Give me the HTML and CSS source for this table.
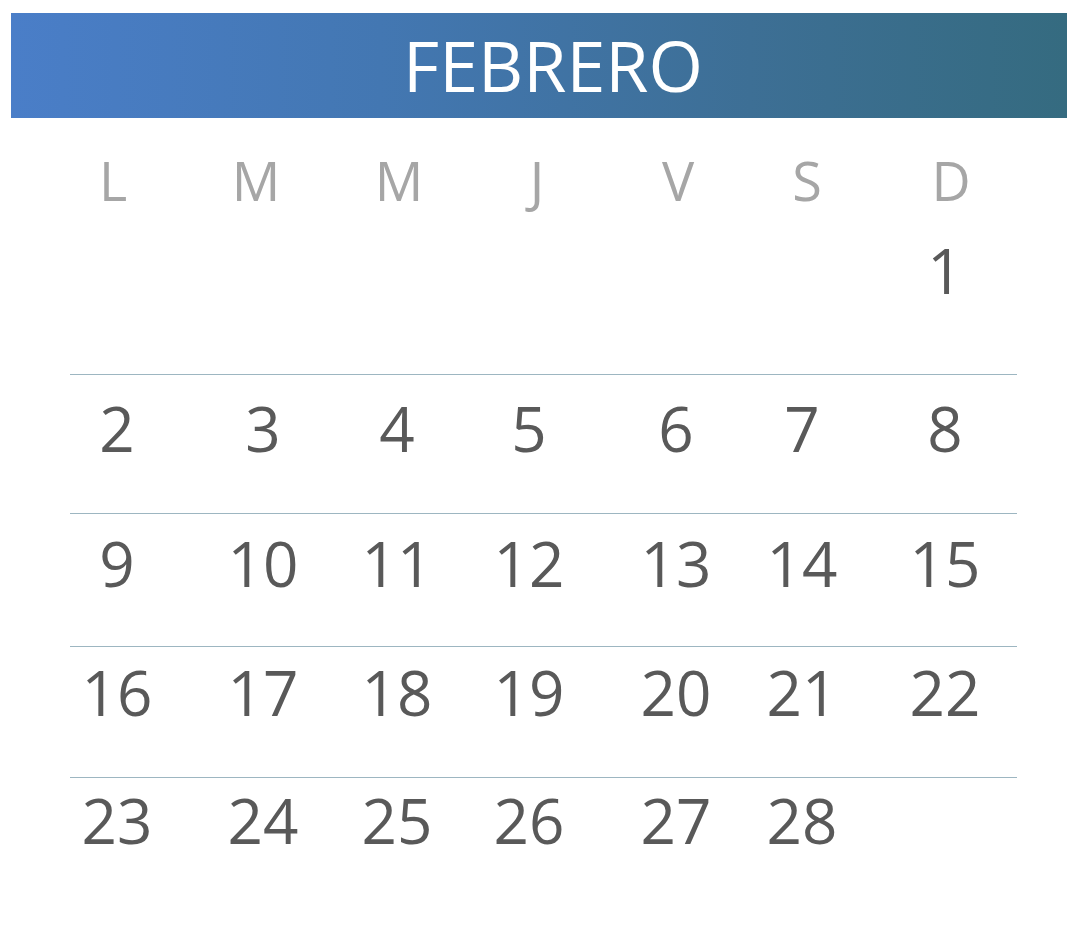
FILE: index.html
```html
<!DOCTYPE html>
<html lang="es">
<head>
<meta charset="utf-8">
<title>Febrero</title>
<link rel="stylesheet" href="styles.css">
</head>
<body>
<div class="page">
  <header class="month">FEBRERO</header>
  <div class="cal">
    <div class="grid weekdays">
      <span class="cell">L</span><span class="cell">M</span><span class="cell">M</span><span class="cell">J</span><span class="cell">V</span><span class="cell">S</span><span class="cell">D</span>
    </div>
    <div class="grid week w1">
      <span class="cell"></span><span class="cell"></span><span class="cell"></span><span class="cell"></span><span class="cell"></span><span class="cell"></span><span class="cell">1</span>
    </div>
    <div class="grid week w2 ruled">
      <span class="cell">2</span><span class="cell">3</span><span class="cell">4</span><span class="cell">5</span><span class="cell">6</span><span class="cell">7</span><span class="cell">8</span>
    </div>
    <div class="grid week w3 ruled">
      <span class="cell">9</span><span class="cell">10</span><span class="cell">11</span><span class="cell">12</span><span class="cell">13</span><span class="cell">14</span><span class="cell">15</span>
    </div>
    <div class="grid week w4 ruled">
      <span class="cell">16</span><span class="cell">17</span><span class="cell">18</span><span class="cell">19</span><span class="cell">20</span><span class="cell">21</span><span class="cell">22</span>
    </div>
    <div class="grid week w5 ruled">
      <span class="cell">23</span><span class="cell">24</span><span class="cell">25</span><span class="cell">26</span><span class="cell">27</span><span class="cell">28</span><span class="cell"></span>
    </div>
  </div>
</div>
</body>
</html>
```
FILE: styles.css
```css
html, body {
  margin: 0;
  padding: 0;
  background: #ffffff;
}

body {
  font-family: "Open Sans", "Noto Sans", sans-serif;
}

.page {
  padding-top: 13px;
}

.month {
  margin: 0 9px 0 11px;
  padding-left: 28px;
  height: 105px;
  line-height: 105px;
  text-align: center;
  color: #ffffff;
  font-size: 70px;
  font-weight: 400;
  background: linear-gradient(90deg, #4a7ec8 0%, #4377b2 35%, #3d6f95 70%, #356b80 100%);
}

.cal {
  margin-left: 70px;
  width: 947px;
}

.grid {
  display: grid;
  grid-template-columns: 94px 198px 70px 194px 100px 152px 134px;
}

.cell {
  display: flex;
  justify-content: center;
  white-space: nowrap;
}

.weekdays {
  grid-template-columns: 86px 200px 86px 190px 92px 166px 122px;
  padding-top: 32px;
  height: 60px;
  line-height: 60px;
  font-size: 54px;
  color: #a6a6a6;
}

.week {
  line-height: 62px;
  font-size: 62px;
  color: #595959;
}

.ruled {
  border-top: 1px solid #9db6c1;
}

.w1 { padding-top: 29px; padding-bottom: 73px; }
.w2 { padding-top: 22px; padding-bottom: 54px; }
.w3 { padding-top: 18px; padding-bottom: 52px; }
.w4 { padding-top: 14px; padding-bottom: 54px; }
.w5 { padding-top: 11px; padding-bottom: 40px; }
```
